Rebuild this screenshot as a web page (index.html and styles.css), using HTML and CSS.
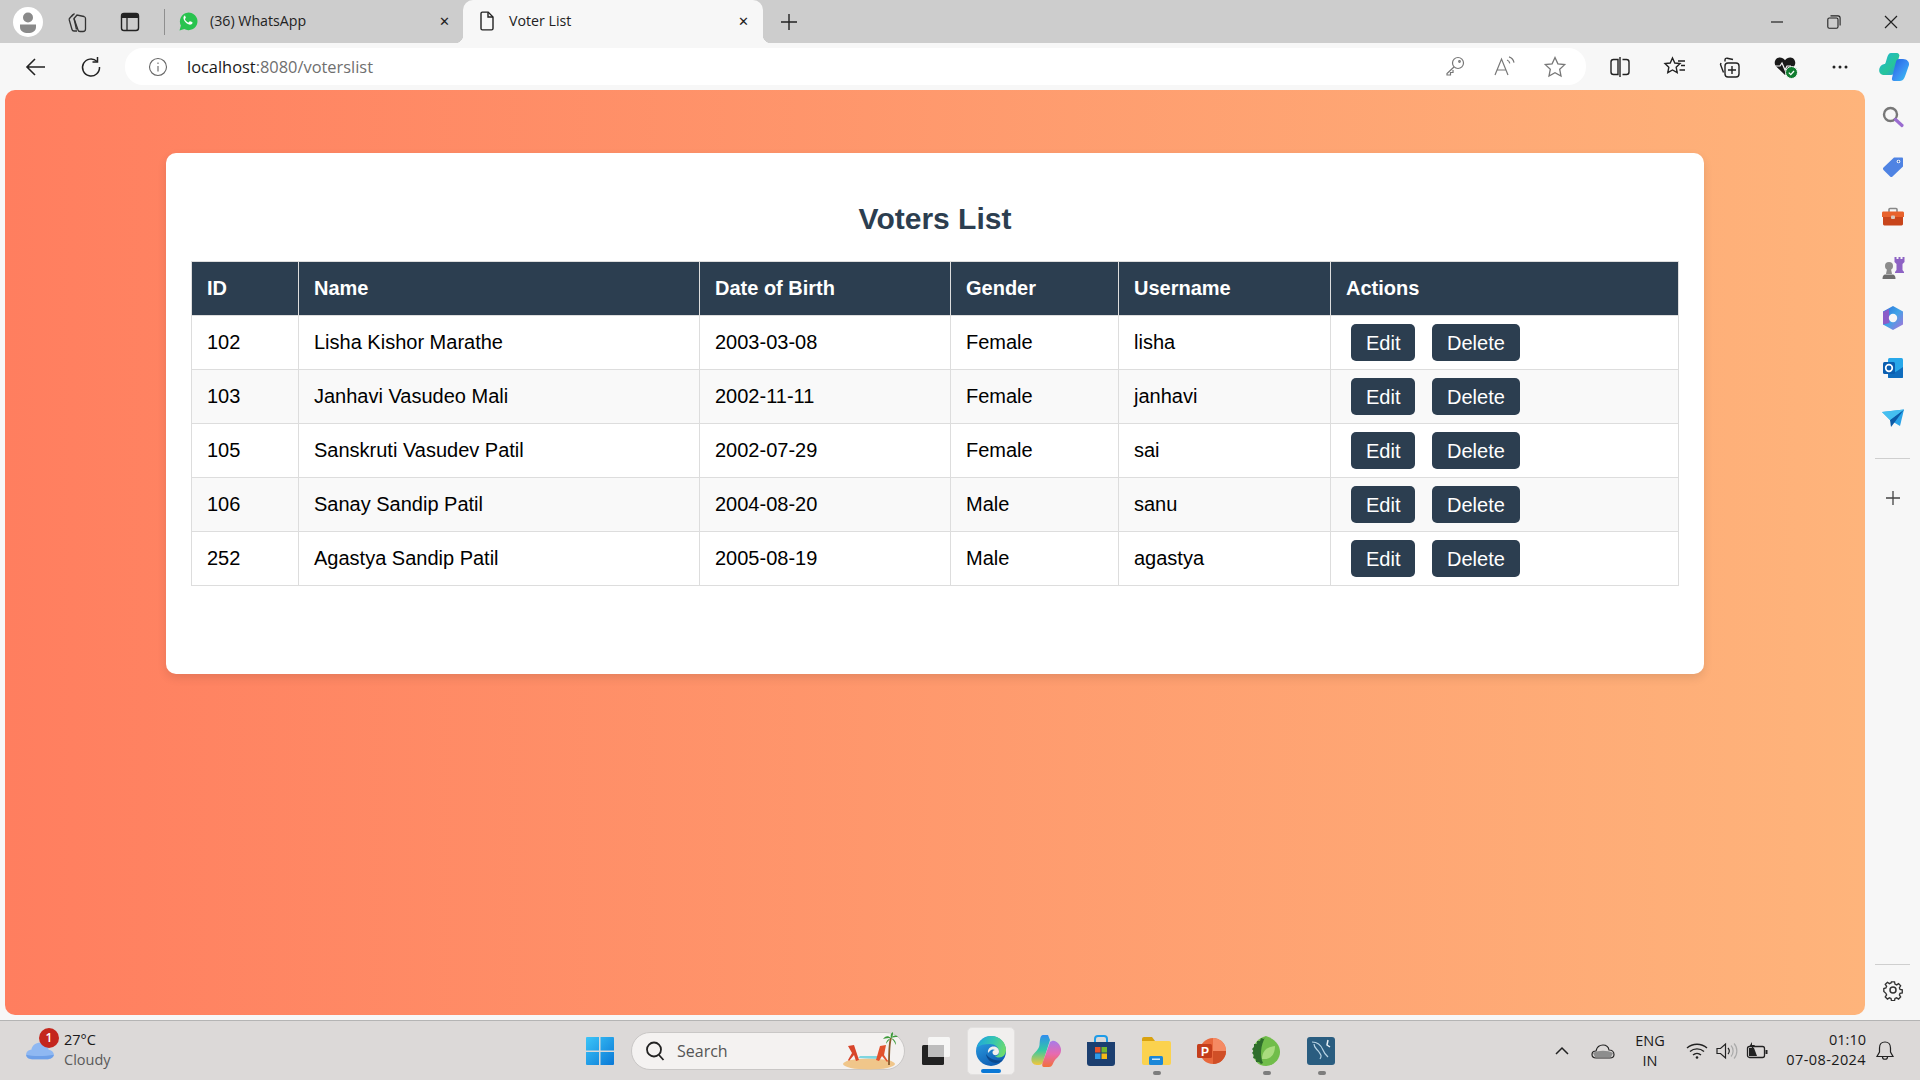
FILE: index.html
```html
<!DOCTYPE html>
<html lang="en">
<head>
    <meta charset="UTF-8">
    <title>Voter List</title>
    <link rel="stylesheet" href="styles.css">
</head>
<body>
    <!-- Tab strip -->
    <div class="tabbar">
        <div class="profile">
            <svg width="30" height="30" viewBox="0 0 30 30"><circle cx="15" cy="15" r="15" fill="#fff"/><circle cx="15" cy="10.5" r="5" fill="#8a8a8a"/><path d="M7 17.5h16v2.5c0 4-3.5 6-8 6s-8-2-8-6z" fill="#8a8a8a"/></svg>
        </div>
        <div class="tab-tool tab-tool-first">
            <svg width="24" height="24" viewBox="0 0 24 24" fill="none" stroke="#333" stroke-width="1.3"><path d="M9 8.500l3-3.500 7 1.500c1 .3 1.500 1 1.500 2V19c0 1.500-1 2.500-2.500 2.500h-3c-1 0-1.800-.6-2-1.500z"/><path d="M6.500 6.500L9.500 3.500M4 9l4-4.500M4 9l3 10.500c.3 1 1 1.500 2 1.500h3"/><path d="M9 8.500l2.500 11"/></svg>
        </div>
        <div class="tab-tool">
            <svg width="22" height="24" viewBox="0 0 22 24" fill="none"><rect x="2.500" y="3.500" width="17" height="17" rx="2.500" stroke="#222" stroke-width="1.400"/><path d="M3 5.500a2 2 0 0 1 2-2h12a2 2 0 0 1 2 2V8H3z" fill="#222"/><path d="M8 8v12" stroke="#222" stroke-width="1.300"/></svg>
        </div>
        <div class="tab-divider"></div>
        <div class="tab">
            <svg class="tab-icon" width="20" height="22" viewBox="0 0 20 22"><path d="M1.500 20.500l1.400-5A8.800 8.800 0 1 1 6.300 19z" fill="#29c34f"/><path d="M7 5.800c-.5 0-1.300.5-1.500 1.500-.3 1.700.7 3.600 2.300 5.200 1.600 1.500 3.500 2.400 5 2.100 1-.2 1.700-1 1.700-1.800 0-.4-.1-.5-.4-.7l-1.900-.9c-.3-.1-.5 0-.7.2l-.7.9c-.2.200-.4.200-.6.100-1.300-.6-2.500-1.700-3.200-3-.1-.2-.1-.4.100-.6l.6-.7c.2-.2.2-.4.100-.6l-.8-1.900c-.2-.4-.4-.4-.7-.4z" fill="#fff"/></svg>
            <span class="tab-title">(36) WhatsApp</span>
            <span class="tab-close">✕</span>
        </div>
        <div class="tab tab-active">
            <svg class="tab-icon" width="20" height="22" viewBox="0 0 20 22" fill="none" stroke="#222" stroke-width="1.400"><path d="M4 3.500c0-.8.600-1.400 1.400-1.400h5.800L16 7v11.500c0 .8-.6 1.400-1.400 1.400H5.400c-.8 0-1.400-.6-1.400-1.400z"/><path d="M11 2.300V7h5"/></svg>
            <span class="tab-title">Voter List</span>
            <span class="tab-close">✕</span>
        </div>
        <div class="new-tab">
            <svg width="20" height="20" viewBox="0 0 20 20" stroke="#222" stroke-width="1.400"><path d="M10 2v16M2 10h16"/></svg>
        </div>
        <div class="window-controls">
            <div class="win-btn"><svg width="14" height="14" viewBox="0 0 14 14" stroke="#222" stroke-width="1.200"><path d="M1 7h12"/></svg></div>
            <div class="win-btn"><svg width="14" height="14" viewBox="0 0 14 14" fill="none" stroke="#222" stroke-width="1.100"><rect x=".8" y="3" width="10.200" height="10.200" rx="1.500"/><path d="M3.500 .9h7.500c1.200 0 2.100.9 2.100 2.100v7.500"/></svg></div>
            <div class="win-btn"><svg width="14" height="14" viewBox="0 0 14 14" stroke="#222" stroke-width="1.200"><path d="M1 1l12 12M13 1L1 13"/></svg></div>
        </div>
    </div>

    <!-- Address bar and toolbar -->
    <div class="toolbar">
        <div class="tool tool-first">
            <svg width="24" height="24" viewBox="0 0 24 24" fill="none" stroke="#222" stroke-width="1.600"><path d="M21 12H3.500M11 4l-8 8 8 8"/></svg>
        </div>
        <div class="tool">
            <svg width="24" height="24" viewBox="0 0 24 24" fill="none" stroke="#222" stroke-width="1.500"><path d="M18 6.500A8.500 8.500 0 1 0 20.500 12"/><path d="M18.500 2v5h-5"/></svg>
        </div>
        <div class="address">
            <svg class="info-icon" width="20" height="20" viewBox="0 0 20 20" fill="none" stroke="#666" stroke-width="1.100"><circle cx="10" cy="10" r="8.500"/><path d="M10 9v5.500M10 5.500v1.500"/></svg>
            <span class="url"><span class="url-host">localhost</span>:8080/voterslist</span>
            <div class="address-tools">
                <div class="addr-tool"><svg width="22" height="22" viewBox="0 0 22 22" fill="none" stroke="#777" stroke-width="1.200"><circle cx="14" cy="8" r="5.500"/><path d="M10 12l-7 6.500V20h3.500v-2.500H9V15"/><circle cx="15.500" cy="6.500" r=".8"/></svg></div>
                <div class="addr-tool"><svg width="24" height="22" viewBox="0 0 24 22" fill="none" stroke="#777" stroke-width="1.200"><path d="M2 20L8.500 4 15 20M4.300 15h8.400"/><path d="M14 5c1.500.5 2.500 1.800 2.800 3.400M16 1.800c2.700.8 4.500 3 5 5.900"/></svg></div>
                <div class="addr-tool"><svg width="24" height="24" viewBox="0 0 24 24" fill="none" stroke="#777" stroke-width="1.300"><path d="M12 2.500l2.900 6.300 6.800.8-5 4.700 1.300 6.800-6-3.400-6 3.400 1.300-6.800-5-4.700 6.800-.8z"/></svg></div>
            </div>
        </div>
        <div class="tool">
            <svg width="22" height="22" viewBox="0 0 22 22" fill="none" stroke="#222" stroke-width="1.400"><path d="M9 3.500H4.500A2.500 2.500 0 0 0 2 6v10a2.500 2.500 0 0 0 2.500 2.500H9zM13.500 3.500h4A2.500 2.500 0 0 1 20 6v10a2.500 2.500 0 0 1-2.500 2.500h-4"/><path d="M11 1v20"/></svg>
        </div>
        <div class="tool">
            <svg width="24" height="24" viewBox="0 0 24 24" fill="none" stroke="#222" stroke-width="1.400"><path d="M9.500 3l2.300 5 5.200.6-3.800 3.700 1 5.400-4.700-2.700-4.700 2.700 1-5.400L2 8.600 7.200 8z"/><path d="M15 6h7M18 10.500h4M16.500 15H22"/></svg>
        </div>
        <div class="tool">
            <svg width="24" height="24" viewBox="0 0 24 24" fill="none" stroke="#222" stroke-width="1.400"><path d="M7 6.500V5c0-1.200 1-2 2.200-1.800L15 4.500M3 8l-.5 1.500 3 8"/><rect x="7" y="8" width="14" height="14" rx="3"/><path d="M14 11v8M10 15h8"/></svg>
        </div>
        <div class="tool tool-heart">
            <svg width="26" height="26" viewBox="0 0 26 26"><path d="M12 21L3.200 12.500C.2 9.300 2 3.800 6.500 3.500c2.300-.1 4 .8 5.500 2.700 1.500-1.900 3.200-2.800 5.500-2.700 4.500.3 6.300 5.800 3.300 9z" fill="#1a1a1a"/><path d="M1 12h6l2-3 3 7 2-4h4" fill="none" stroke="#f7f7f7" stroke-width="1.200"/><circle cx="18.500" cy="18.500" r="6" fill="#107c2f" stroke="#f7f7f7" stroke-width="1"/><path d="M15.800 18.600l2 2 3.200-3.600" fill="none" stroke="#fff" stroke-width="1.300"/></svg>
        </div>
        <div class="tool">
            <svg width="16" height="4" viewBox="0 0 16 4" fill="#222"><circle cx="2" cy="2" r="1.500"/><circle cx="8" cy="2" r="1.500"/><circle cx="14" cy="2" r="1.500"/></svg>
        </div>
        <div class="tool tool-last">
            <svg width="32" height="30" viewBox="0 0 32 30">
                <defs>
                    <linearGradient id="cp1" x1="0" y1="0" x2="1" y2="1"><stop offset="0" stop-color="#1fb5d8"/><stop offset=".6" stop-color="#27c59a"/><stop offset="1" stop-color="#2d8ef0"/></linearGradient>
                    <linearGradient id="cp2" x1="0" y1="0" x2="1" y2="1"><stop offset="0" stop-color="#1d5fe0"/><stop offset=".5" stop-color="#3a8bf2"/><stop offset="1" stop-color="#35c8f0"/></linearGradient>
                </defs>
                <path d="M13 1h6c1.500 0 2 1 2.400 2.400L17 20c-.6 2-2 3-4 3H6c-3 0-5-2.200-4.800-5C1.500 14 4.500 12 7 12c2.200-4 2-11 6-11z" fill="url(#cp1)"/>
                <path d="M25 7h-4c-1.500 0-2.500 1-3 2.500L14 26c-.5 2 .5 3 2 3h6c3 0 4.500-3 5.500-6L31 13c.6-3-2-6-6-6z" fill="url(#cp2)"/>
            </svg>
        </div>
    </div>

    <div class="main">
        <!-- The web page itself -->
        <div class="page">
            <div class="container">
                <h2 class="title">Voters List</h2>
                <table class="voters">
                    <colgroup>
                        <col class="col-id">
                        <col class="col-name">
                        <col class="col-dob">
                        <col class="col-gender">
                        <col class="col-user">
                        <col class="col-actions">
                    </colgroup>
                    <thead>
                        <tr>
                            <th>ID</th>
                            <th>Name</th>
                            <th>Date of Birth</th>
                            <th>Gender</th>
                            <th>Username</th>
                            <th>Actions</th>
                        </tr>
                    </thead>
                    <tbody>
                        <tr>
                            <td>102</td>
                            <td>Lisha Kishor Marathe</td>
                            <td>2003-03-08</td>
                            <td>Female</td>
                            <td>lisha</td>
                            <td><a class="btn" href="#">Edit</a> <a class="btn" href="#">Delete</a></td>
                        </tr>
                        <tr>
                            <td>103</td>
                            <td>Janhavi Vasudeo Mali</td>
                            <td>2002-11-11</td>
                            <td>Female</td>
                            <td>janhavi</td>
                            <td><a class="btn" href="#">Edit</a> <a class="btn" href="#">Delete</a></td>
                        </tr>
                        <tr>
                            <td>105</td>
                            <td>Sanskruti Vasudev Patil</td>
                            <td>2002-07-29</td>
                            <td>Female</td>
                            <td>sai</td>
                            <td><a class="btn" href="#">Edit</a> <a class="btn" href="#">Delete</a></td>
                        </tr>
                        <tr>
                            <td>106</td>
                            <td>Sanay Sandip Patil</td>
                            <td>2004-08-20</td>
                            <td>Male</td>
                            <td>sanu</td>
                            <td><a class="btn" href="#">Edit</a> <a class="btn" href="#">Delete</a></td>
                        </tr>
                        <tr>
                            <td>252</td>
                            <td>Agastya Sandip Patil</td>
                            <td>2005-08-19</td>
                            <td>Male</td>
                            <td>agastya</td>
                            <td><a class="btn" href="#">Edit</a> <a class="btn" href="#">Delete</a></td>
                        </tr>
                    </tbody>
                </table>
            </div>
        </div>

        <!-- Edge sidebar -->
        <div class="sidebar">
            <div class="side-item"><svg width="24" height="24" viewBox="0 0 24 24" fill="none"><circle cx="9.500" cy="9.500" r="6.500" stroke="#777" stroke-width="2.400"/><path d="M14.500 14.500l6.500 6" stroke="#9a6cd0" stroke-width="3.200" stroke-linecap="round"/></svg></div>
            <div class="side-item"><svg width="24" height="24" viewBox="0 0 24 24"><path d="M13 2.500h8c.5 0 1 .5 1 1v8L11.500 21.500c-.7.700-1.700.7-2.400 0l-6.600-6.600c-.7-.7-.7-1.700 0-2.400z" fill="#4f83e3"/><circle cx="17.500" cy="6.500" r="1.800" fill="#fff"/><circle cx="17.500" cy="6.500" r=".9" fill="#3361b8"/></svg></div>
            <div class="side-item"><svg width="24" height="24" viewBox="0 0 24 24"><path d="M8 7V4.500c0-.6.400-1 1-1h6c.6 0 1 .4 1 1V7" fill="none" stroke="#888" stroke-width="1.600"/><path d="M1 8c0-.8.600-1.400 1.400-1.400h19.200c.8 0 1.400.6 1.400 1.400v4H1z" fill="#e8622c"/><path d="M2 12h20v7c0 .8-.6 1.400-1.400 1.400H3.400C2.600 20.400 2 19.800 2 19z" fill="#c8451b"/><rect x="10" y="10.500" width="4" height="3.500" rx="1" fill="#d9c8bc"/></svg></div>
            <div class="side-item"><svg width="24" height="24" viewBox="0 0 24 24"><circle cx="8" cy="10" r="4" fill="#8c8c8c"/><path d="M6 13h4l1 5H5z" fill="#8c8c8c"/><path d="M1.500 23c0-3 1-4.500 3-4.500h7c2 0 3 1.500 3 4.500z" fill="#6d6d6d"/><path d="M13.500 1h2v2h2V1h2v2h2V1h2v5l-2 2v6l1.500 2v1h-9v-1l1.500-2V8l-2-2z" fill="#8d62c4"/></svg></div>
            <div class="side-item">
                <svg width="24" height="26" viewBox="0 0 24 26">
                    <defs><linearGradient id="m365" x1="0" y1="0" x2="1" y2="1"><stop offset="0" stop-color="#2a6fdb"/><stop offset=".5" stop-color="#3fa4e8"/><stop offset="1" stop-color="#b06fd8"/></linearGradient></defs>
                    <path d="M12 1l10 5.500v13L12 25 2 19.500v-13z" fill="url(#m365)"/>
                    <path d="M2 7l6-3 .5 14-6.500 1.500z" fill="#8a5cc8"/>
                    <circle cx="12" cy="13" r="4.200" fill="#f7f7f7"/>
                </svg>
            </div>
            <div class="side-item"><svg width="22" height="22" viewBox="0 0 22 22"><rect x="6" y="1" width="15" height="20" rx="1.500" fill="#28a8ea"/><path d="M6 10l7.500 5L21 10v10c0 .6-.5 1-1 1H7c-.6 0-1-.4-1-1z" fill="#0f6cbd"/><rect x="1" y="5" width="12" height="12" rx="1.500" fill="#0a5eb0"/><circle cx="7" cy="11" r="3.300" fill="none" stroke="#fff" stroke-width="1.700"/></svg></div>
            <div class="side-item"><svg width="24" height="20" viewBox="0 0 24 20"><path d="M1 4l22-2.500L19 18 9 12z" fill="#2aa3e8"/><path d="M23 1.500L9 12l1 7 3.500-4.500z" fill="#0c5aa6"/><path d="M1 4l22-2.500L9 12z" fill="#45bff0"/></svg></div>
            <div class="side-divider"></div>
            <div class="side-item side-plus"><svg width="16" height="16" viewBox="0 0 16 16" stroke="#444" stroke-width="1.300"><path d="M8 1v14M1 8h14"/></svg></div>
            <div class="side-bottom">
                <div class="side-divider side-divider-low"></div>
                <div class="side-item"><svg width="22" height="22" viewBox="0 0 22 22" fill="none" stroke="#333" stroke-width="1.500"><circle cx="11" cy="11" r="3"/><path d="M9.300 2h3.400l.5 2.500 1.800.8 2.200-1.400 2.300 2.400-1.400 2.200.7 1.800 2.500.5v3.400l-2.500.5-.7 1.800 1.400 2.200-2.300 2.400-2.200-1.400-1.800.7-.5 2.500H9.300l-.5-2.500-1.800-.7-2.200 1.400-2.400-2.400 1.500-2.200-.8-1.800L.8 12.700V9.300l2.300-.5.800-1.800-1.500-2.200 2.400-2.400L7 3.900l1.800-.8z" transform="translate(1.100 1.100) scale(.9)"/></svg></div>
            </div>
        </div>
    </div>

    <!-- Windows taskbar -->
    <div class="taskbar">
        <div class="weather">
            <div class="weather-icon">
                <svg width="30" height="19" viewBox="0 0 34 22"><path d="M8 21c-4 0-7-2.500-7-5.500S3.500 10 7 10c1-5 5-8 10-8 5.500 0 9 3 10 8 3 .5 6 2.500 6 5.500S29 21 26 21z" fill="#8fb8f2"/><path d="M8 21c-4 0-7-2-7-5 6 2 23 2 32 0 0 3-4 5-7 5z" fill="#6d9fe8"/></svg>
                <span class="badge">1</span>
            </div>
            <div class="weather-text">
                <div>27°C</div>
                <div class="weather-sub">Cloudy</div>
            </div>
        </div>

        <div class="task-center">
            <div class="app app-start">
                <svg width="30" height="30" viewBox="0 0 30 30">
                    <defs><linearGradient id="win" x1="0" y1="0" x2="1" y2="1"><stop offset="0" stop-color="#3cc5f8"/><stop offset="1" stop-color="#0a78d6"/></linearGradient></defs>
                    <path d="M1 2a1 1 0 0 1 1-1h12v13.500H1zM15.500 1H28a1 1 0 0 1 1 1v12.500H15.500zM1 16h13v13H2a1 1 0 0 1-1-1zM15.500 16H29v12a1 1 0 0 1-1 1H15.500z" fill="url(#win)"/>
                </svg>
            </div>
            <div class="search">
                <svg width="22" height="22" viewBox="0 0 22 22" fill="none" stroke="#222" stroke-width="1.800"><circle cx="10" cy="9.500" r="7"/><path d="M15 15l4.500 5"/></svg>
                <span class="search-text">Search</span>
                <svg class="search-art" width="56" height="38" viewBox="0 0 56 38">
                    <ellipse cx="27" cy="32" rx="26" ry="5.500" fill="#f0c68a"/>
                    <path d="M16 26l2-2h18l2 3z" fill="#7fd6e0"/>
                    <path d="M6 14l6-1 5 15-3 1-2-6-5 6-1-1 4-7z" fill="#d8452b"/>
                    <path d="M38 14l6-1-2 10 4 6-1 1-5-6-3 5-3-1z" fill="#e2532e"/>
                    <path d="M47 33C47 20 47 12 49 6" stroke="#8a5a2b" stroke-width="1.800" fill="none"/>
                    <path d="M49 6c-3-3-6-2-8 1 3-1 5-1 8-1zM49 6c3-3 5-3 7-1-3 0-5 0-7 1zM49 6c-1-3 0-5 2-6 0 3 0 4-2 6zM49 6c-3 1-5 3-5 6 2-3 3-4 5-6zM49 6c3 1 5 3 5 7-2-4-3-5-5-7z" fill="#3d9a3b"/>
                </svg>
            </div>
            <div class="app app-view">
                <svg width="30" height="30" viewBox="0 0 30 30"><rect x="1" y="9" width="22" height="20" rx="1.500" fill="#222"/><rect x="7" y="1" width="22" height="20" rx="1.500" fill="#fff" fill-opacity=".75"/><rect x="7" y="9" width="16" height="12" fill="#bdbdbd"/></svg>
            </div>
            <div class="app app-current">
                <svg width="32" height="32" viewBox="0 0 32 32">
                    <defs>
                        <linearGradient id="edge1" x1="0" y1="0" x2=".5" y2="1"><stop offset="0" stop-color="#30a8e8"/><stop offset="1" stop-color="#0f5fb4"/></linearGradient>
                        <linearGradient id="edge2" x1="0" y1=".3" x2="1" y2=".6"><stop offset="0" stop-color="#1fa6dc"/><stop offset=".5" stop-color="#35c6b0"/><stop offset="1" stop-color="#6fdc6a"/></linearGradient>
                    </defs>
                    <circle cx="16" cy="16" r="15" fill="url(#edge1)"/>
                    <path d="M1.500 13C4 6 9.500 1 16 1c9 0 15 6.500 15 14 0 4.500-3 7.500-7 7.500-2 0-3.500-.7-4-1.500 2.500 0 4-1.500 4-4 0-4.500-4-8-9-8-6 0-10 1-13.500 3.500z" fill="url(#edge2)"/>
                    <path d="M11 19c.5 5 5 9 10 9 2.500 0 5-1 7-3-1.500.5-3 .7-4.500.5C17 25 13 22 11 19z" fill="#0b4a8f"/>
                    <path d="M13 18c-.5-4 2-6.500 5.500-6.500 3 0 5.500 2 5.500 5 0 1.500-.8 3-2.500 3.500-2 .5-4-.5-4-2.500 0-1.500 1-2.500 2.500-2.500-1.500-1-3.500-.5-4.500.5-1 .7-1.700 1.500-2.500 2.500z" fill="#f1efee"/>
                </svg>
                <span class="app-active-bar"></span>
            </div>
            <div class="app">
                <svg width="32" height="34" viewBox="0 0 32 34">
                    <defs>
                        <linearGradient id="ms1" x1="0" y1="0" x2="0" y2="1"><stop offset="0" stop-color="#2f8cf0"/><stop offset=".5" stop-color="#33c9a5"/><stop offset="1" stop-color="#f3c63a"/></linearGradient>
                        <linearGradient id="ms2" x1="0" y1="0" x2="0" y2="1"><stop offset="0" stop-color="#a77be8"/><stop offset=".5" stop-color="#e86ab0"/><stop offset="1" stop-color="#f2703a"/></linearGradient>
                    </defs>
                    <path d="M13 1h5l2 5-7 22c-.5 2-2 3-4 3H7C3 31 1 28 1.500 24.500 2 19 9 17 9.500 11c.3-4 .5-10 3.500-10z" fill="url(#ms1)"/>
                    <path d="M22 7c4-1 8 3 9 8 .5 5-3 8-6 11-2 2-2 7-6 7h-5c-2 0-2-2-1.500-4L20 8z" fill="url(#ms2)"/>
                </svg>
            </div>
            <div class="app">
                <svg width="30" height="32" viewBox="0 0 30 32"><path d="M9 8V4a3 3 0 0 1 3-3h6a3 3 0 0 1 3 3v4" fill="none" stroke="#1e9ce8" stroke-width="2"/><path d="M1 7h28v21a3 3 0 0 1-3 3H4a3 3 0 0 1-3-3z" fill="#1c3f70"/><rect x="9" y="12" width="5.500" height="5.500" fill="#e8532a"/><rect x="15.500" y="12" width="5.500" height="5.500" fill="#75b82e"/><rect x="9" y="18.500" width="5.500" height="5.500" fill="#2d9be8"/><rect x="15.500" y="18.500" width="5.500" height="5.500" fill="#f5ba18"/></svg>
            </div>
            <div class="app app-open">
                <svg width="30" height="28" viewBox="0 0 30 28"><path d="M1 2a2 2 0 0 1 2-2h8l3 4H1z" fill="#d9a20f"/><path d="M1 4h27a2 2 0 0 1 2 2v20a2 2 0 0 1-2 2H3a2 2 0 0 1-2-2z" fill="#fbd24e"/><rect x="8" y="19" width="14" height="9" rx="1.500" fill="#1b87d8"/><rect x="11" y="21.500" width="8" height="1.500" fill="#cde8f8"/></svg>
                <span class="app-dot"></span>
            </div>
            <div class="app">
                <svg width="30" height="30" viewBox="0 0 30 30"><circle cx="17" cy="15" r="13" fill="#e8683c"/><path d="M17 2a13 13 0 0 1 13 13H17z" fill="#f58a63"/><path d="M17 15h13a13 13 0 0 1-13 13z" fill="#d04f27"/><rect x="1" y="8" width="15" height="14" rx="1.500" fill="#c43e1c"/><text class="ppt-letter" x="5" y="19.500">P</text></svg>
            </div>
            <div class="app app-open">
                <svg width="30" height="32" viewBox="0 0 30 32"><path d="M15 1c9 3 14 9 14 16 0 7-6 14-14 14C7 31 2 25 2 17 2 9 7 3 15 1z" fill="#71bd4a"/><path d="M15 1l-2 3-3-1-1 3-3 0v3H3v3l-2 2 1.500 2L1 18l2 2-1 3 3 1v3l3 0 2 2 2-1C9 22 9 10 15 1z" fill="#2f6e2c"/><path d="M11 24c0-7 4-12 13-13 0 8-4 14-13 13z" fill="#a9dc7e"/></svg>
                <span class="app-dot"></span>
            </div>
            <div class="app app-open">
                <svg width="30" height="30" viewBox="0 0 30 30"><rect x="1" y="1" width="28" height="28" rx="3" fill="#2a5d80"/><path d="M6 6c5 0 9 3 11 8 1 3 3 5 5 7M8 8c0 4 3 5 5 8s3 4 1 7" fill="none" stroke="#b8d4e4" stroke-width="1.200"/><path d="M22 4l-1 5 3 2" fill="none" stroke="#e6eef3" stroke-width="1.500"/></svg>
                <span class="app-dot"></span>
            </div>
        </div>

        <div class="tray">
            <div class="tray-icon tray-chevron"><svg width="16" height="10" viewBox="0 0 16 10" fill="none" stroke="#222" stroke-width="1.500"><path d="M2 8l6-6 6 6"/></svg></div>
            <div class="tray-icon tray-cloud"><svg width="24" height="18" viewBox="0 0 24 18"><path d="M5 16c-2.500 0-4-1.500-4-3.500S2.500 9 5 9c.8-3.500 3.500-6 7-6 3 0 5.500 2 6 5 2.800 0 5 2 5 4.500S21 16 19 16z" fill="#dcd9d8" stroke="#222" stroke-width="1.200"/><path d="M2 11c5-3 15-3 20 0l-2 4H4z" fill="#8d8d8d"/></svg></div>
            <div class="tray-lang">ENG<br>IN</div>
            <div class="tray-icon tray-wifi"><svg width="22" height="18" viewBox="0 0 22 18" fill="none" stroke="#222" stroke-width="1.400"><path d="M1 6c5.500-5 14.500-5 20 0M4 9.500c4-3.500 10-3.500 14 0M7 13c2.300-2 5.700-2 8 0"/><circle cx="11" cy="15.500" r="1.300" fill="#222" stroke="none"/></svg></div>
            <div class="tray-icon tray-sound"><svg width="22" height="18" viewBox="0 0 22 18" fill="none" stroke="#222" stroke-width="1.200"><path d="M1 6.500h3.500L9.500 2v14l-5-4.500H1z"/><path d="M12 6c1.500 1.700 1.500 4.300 0 6"/><path d="M15 3.500c2.800 3 2.800 8 0 11M18 1.500c3.800 4 3.800 11 0 15" stroke="#aaa"/></svg></div>
            <div class="tray-icon tray-battery"><svg width="22" height="18" viewBox="0 0 22 18"><rect x="1.500" y="4.500" width="17" height="11" rx="2" fill="none" stroke="#222" stroke-width="1.300"/><path d="M3 14V6h5l3 8z" fill="#222"/><rect x="19.500" y="8" width="2" height="4" fill="#222"/><path d="M6 0L3 5h3l-1 4 4-6H6z" fill="#222"/></svg></div>
            <div class="clock">
                <div>01:10</div>
                <div class="clock-date">07-08-2024</div>
            </div>
            <div class="tray-icon tray-bell"><svg width="20" height="22" viewBox="0 0 20 22" fill="none" stroke="#222" stroke-width="1.200"><path d="M10 2c-3.500 0-5.500 2.500-5.500 6v4L2 16.500h16L15.500 12V8c0-3.500-2-6-5.500-6z"/><path d="M7.500 17c0 3 5 3 5 0"/></svg></div>
        </div>
    </div>
</body>
</html>
```

FILE: styles.css
```css
* {
    box-sizing: border-box;
}

body {
    margin: 0;
    width: 1920px;
    height: 1080px;
    overflow: hidden;
    font-family: "Open Sans", "Noto Sans", sans-serif;
    background-color: #f7f7f7;
    display: flex;
    flex-direction: column;
}

svg {
    display: block;
    flex: none;
}

/* Tab strip */
.tabbar {
    height: 43px;
    background-color: #cdcdcd;
    display: flex;
    align-items: center;
}

.profile {
    margin-left: 13px;
    width: 30px;
    height: 30px;
}

.tab-tool {
    width: 53px;
    display: flex;
    justify-content: center;
}

.tab-tool-first {
    margin-left: 7px;
}

.tab-divider {
    width: 1px;
    height: 26px;
    background-color: #8f8f8f;
    margin-left: 8px;
}

.tab {
    height: 43px;
    width: 298px;
    display: flex;
    align-items: center;
    padding: 0 13px 2px 13px;
    font-size: 14.200px;
    color: #222;
}

.tab-icon {
    margin-right: 12px;
}

.tab-title {
    flex: 1;
}

.tab-close {
    font-size: 13px;
    color: #222;
}

.tab-active {
    position: relative;
    width: 300px;
    background-color: #f7f7f7;
    border-radius: 10px 10px 0 0;
    padding: 0 14px 2px 14px;
}

.tab-active::before,
.tab-active::after {
    content: "";
    position: absolute;
    bottom: 0;
    width: 8px;
    height: 8px;
}

.tab-active::before {
    left: -8px;
    background: radial-gradient(circle at 0 0, #cdcdcd 8px, #f7f7f7 8.500px);
}

.tab-active::after {
    right: -8px;
    background: radial-gradient(circle at 100% 0, #cdcdcd 8px, #f7f7f7 8.500px);
}

.new-tab {
    margin-left: 16px;
}

.window-controls {
    margin-left: auto;
    display: flex;
    margin-right: 1px;
}

.win-btn {
    width: 57px;
    display: flex;
    justify-content: center;
}

/* Toolbar */
.toolbar {
    height: 47px;
    background-color: #f7f7f7;
    display: flex;
    align-items: center;
}

.tool {
    width: 55px;
    display: flex;
    justify-content: center;
}

.tool-first {
    margin-left: 8px;
}

.tool-heart {
    padding-left: 2px;
}

.tool-last {
    width: 53px;
}

.address {
    flex: 1;
    height: 37px;
    margin: 0 6px 0 7px;
    background-color: #fff;
    border-radius: 18px;
    display: flex;
    align-items: center;
    padding-left: 23px;
    padding-right: 6px;
}

.info-icon {
    margin-right: 19px;
}

.url {
    font-size: 16.400px;
    color: #6f6f6f;
}

.url-host {
    color: #1a1a1a;
}

.address-tools {
    margin-left: auto;
    display: flex;
}

.addr-tool {
    width: 50px;
    display: flex;
    justify-content: center;
}

/* Main area */
.main {
    height: 930px;
    display: flex;
    padding: 0 0 5px 5px;
}

.page {
    flex: 1;
    border-radius: 10px;
    background: linear-gradient(to right, #ff7e5f, #feb47b);
}

.container {
    width: 1538px;
    height: 521px;
    margin: 63px auto 0;
    padding: 25px;
    background-color: #fff;
    border-radius: 10px;
    box-shadow: 0 4px 10px rgba(0, 0, 0, 0.1);
    font-family: "Liberation Sans", Arial, sans-serif;
}

.title {
    margin: 24px 0 25px;
    font-size: 30px;
    line-height: 34px;
    text-align: center;
    color: #2c3e50;
}

.voters {
    width: 1487px;
    table-layout: fixed;
    border-collapse: collapse;
    font-size: 20px;
    line-height: 23px;
}

.col-id { width: 107px; }
.col-name { width: 401px; }
.col-dob { width: 251px; }
.col-gender { width: 168px; }
.col-user { width: 212px; }
.col-actions { width: 348px; }

.voters th,
.voters td {
    padding: 15px;
    border: 1px solid #ddd;
    text-align: left;
}

.voters th {
    background-color: #2c3e50;
    color: #fff;
}

.voters tbody tr:nth-child(even) {
    background-color: #f9f9f9;
}

.btn {
    padding: 8px 15px 7px;
    margin: 0 5px;
    background-color: #2c3e50;
    color: #fff;
    text-decoration: none;
    border-radius: 5px;
    line-height: 21px;
    vertical-align: -1px;
}

.btn + .btn {
    margin-left: 6px;
}

/* Edge sidebar */
.sidebar {
    width: 55px;
    padding-top: 2px;
    display: flex;
    flex-direction: column;
    align-items: center;
}

.side-item {
    height: 50.200px;
    width: 100%;
    display: flex;
    align-items: center;
    justify-content: center;
}

.side-divider {
    width: 35px;
    height: 1px;
    background-color: #cfcfcf;
    margin-top: 15px;
}

.side-plus {
    margin-top: 14px;
}

.side-bottom {
    margin-top: auto;
    width: 100%;
    display: flex;
    flex-direction: column;
    align-items: center;
}

.side-divider-low {
    margin: 0;
}

/* Taskbar */
.taskbar {
    height: 60px;
    background-color: #dcd9d8;
    border-top: 1px solid #b4b4b4;
    display: flex;
    align-items: center;
    font-size: 14.500px;
    color: #1a1a1a;
}

.weather {
    width: 567px;
    padding-left: 25px;
    display: flex;
    align-items: center;
}

.weather-icon {
    position: relative;
    width: 39px;
    height: 19px;
}

.badge {
    position: absolute;
    top: -13px;
    left: 14px;
    width: 20px;
    height: 20px;
    border-radius: 50%;
    background-color: #c4261d;
    color: #fff;
    font-size: 12px;
    line-height: 20px;
    text-align: center;
    font-weight: 600;
}

.weather-text {
    line-height: 20px;
    margin-bottom: 2px;
}

.weather-sub {
    color: #5a5a5a;
}

.task-center {
    display: flex;
    align-items: center;
    height: 100%;
}

.app {
    position: relative;
    width: 55px;
    height: 48px;
    display: flex;
    align-items: center;
    justify-content: center;
}

.app-start {
    width: 64px;
    justify-content: flex-start;
    padding-left: 18px;
}

.search {
    width: 274px;
    height: 38px;
    margin-right: 8px;
    background-color: #f4f2f1;
    border: 1px solid #c9c7c6;
    border-radius: 19px;
    display: flex;
    align-items: center;
    padding-left: 12px;
    font-size: 16px;
    color: #555;
}

.search-text {
    margin-left: 11px;
}

.search-art {
    margin-left: auto;
    margin-right: 6px;
}

.app-view {
    width: 46px;
    margin-right: 8px;
}

.app-current {
    background-color: #f1efee;
    border: 1px solid #e2e0df;
    border-radius: 5px;
    width: 48px;
    margin-right: 3.500px;
}

.app-active-bar {
    position: absolute;
    bottom: 1px;
    left: 13px;
    width: 20px;
    height: 4px;
    border-radius: 2px;
    background-color: #0a78d6;
}

.app-dot {
    position: absolute;
    bottom: 0;
    left: 24px;
    width: 8px;
    height: 4px;
    border-radius: 2px;
    background-color: #7d7d7d;
}

.ppt-letter {
    font-family: "Liberation Sans", sans-serif;
    font-size: 12px;
    font-weight: 700;
    fill: #fff;
}

.tray {
    margin-left: auto;
    display: flex;
    align-items: center;
}

.tray-chevron { margin-right: 21px; }
.tray-cloud { margin-right: 13px; }

.tray-lang {
    width: 44px;
    text-align: center;
    line-height: 20px;
    margin-right: 14px;
}

.tray-wifi { margin-right: 8px; }
.tray-sound { margin-right: 8px; }
.tray-battery { margin-right: 13px; }

.clock {
    width: 85px;
    text-align: right;
    line-height: 20px;
    margin-right: 9px;
    margin-bottom: 2px;
}

.clock-date {
    letter-spacing: .4px;
}

.tray-bell {
    margin-right: 25px;
}
```
